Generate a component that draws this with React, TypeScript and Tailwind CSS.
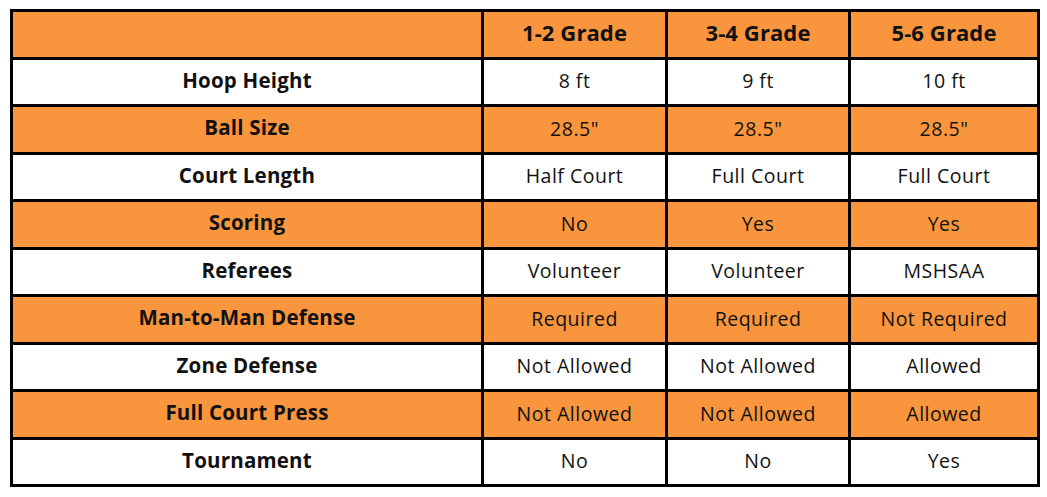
import React from "react";

const rows: [string, string, string, string][] = [
  ["Hoop Height", "8 ft", "9 ft", "10 ft"],
  ["Ball Size", "28.5\"", "28.5\"", "28.5\""],
  ["Court Length", "Half Court", "Full Court", "Full Court"],
  ["Scoring", "No", "Yes", "Yes"],
  ["Referees", "Volunteer", "Volunteer", "MSHSAA"],
  ["Man-to-Man Defense", "Required", "Required", "Not Required"],
  ["Zone Defense", "Not Allowed", "Not Allowed", "Allowed"],
  ["Full Court Press", "Not Allowed", "Not Allowed", "Allowed"],
  ["Tournament", "No", "No", "Yes"],
];

export default function App() {
  return (
    <div className="w-[1047px] h-[497px] bg-white pt-[9px] pl-[10px]" style={{ fontFamily: "'Open Sans', Lato, sans-serif" }}>
      <div className="w-[1030px] h-[478px] bg-black p-[3px] grid grid-cols-[468px_181px_180px_186px] grid-rows-[repeat(10,1fr)] gap-[3px] text-[#111]">
        <div className="bg-[#f8953d]" />
        {["1-2 Grade", "3-4 Grade", "5-6 Grade"].map((h) => (
          <div key={h} className="bg-[#f8953d] flex items-center justify-center pb-[4px] font-bold text-[22px] tracking-[0.1px]">
            {h}
          </div>
        ))}
        {rows.map((r, i) => {
          const bg = i % 2 === 0 ? "bg-white" : "bg-[#f8953d]";
          return (
            <React.Fragment key={r[0]}>
              <div className={`${bg} flex items-center justify-center pb-[3px] font-bold text-[20.5px] tracking-[0.2px]`}>{r[0]}</div>
              {r.slice(1).map((c, j) => (
                <div key={j} className={`${bg} flex items-center justify-center pb-[2px] text-[19.5px] tracking-[0.5px]`}>{c}</div>
              ))}
            </React.Fragment>
          );
        })}
      </div>
    </div>
  );
}
